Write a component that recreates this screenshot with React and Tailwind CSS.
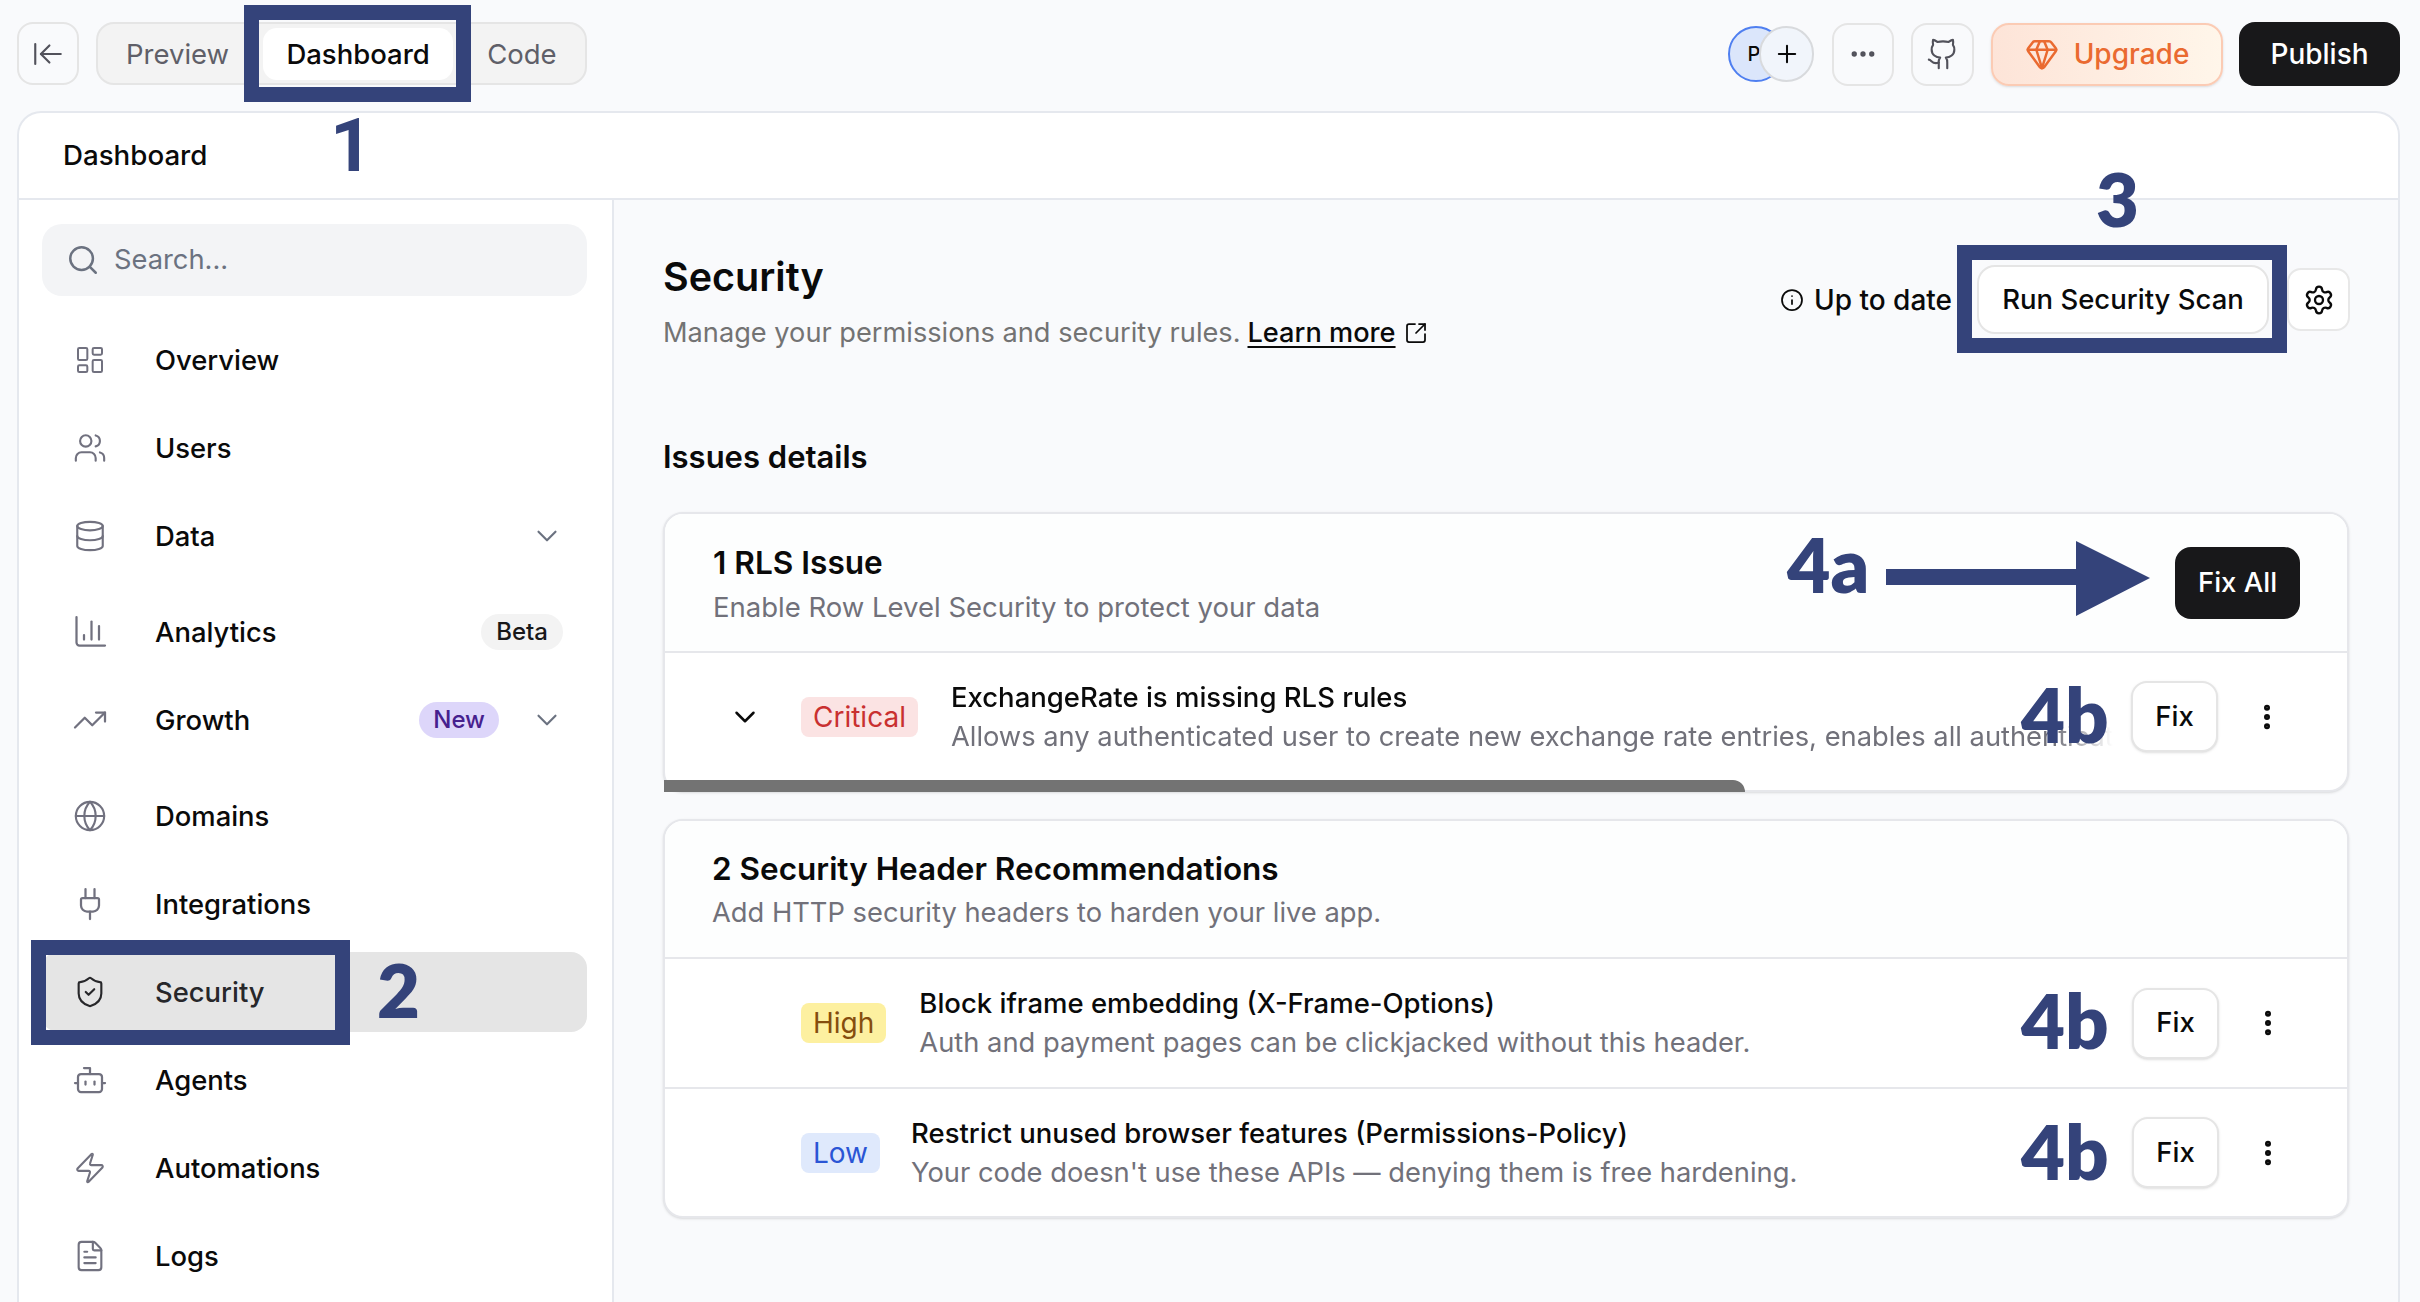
import React from 'react';
import {
  ArrowLeftToLine, Plus, Ellipsis, Gem, Search, LayoutDashboard, Users, Database, ChevronDown,
  TrendingUp, Globe, Plug, ShieldCheck, Bot, Zap, FileText, Info, Settings, SquareArrowOutUpRight, EllipsisVertical,
} from 'lucide-react';

const Github = (p) => (
  <svg width="36" height="36" viewBox="0 0 24 24" fill="none" stroke="currentColor" strokeWidth="1.5" strokeLinecap="round" strokeLinejoin="round" {...p}>
    <path d="M15 22v-4a4.8 4.8 0 0 0-1-3.5c3 0 6-2 6-5.5.08-1.25-.27-2.48-1-3.5.28-1.15.28-2.35 0-3.5 0 0-1 0-3 1.5-2.64-.5-5.36-.5-8 0C6 2 5 2 5 2c-.3 1.15-.3 2.35 0 3.5A5.403 5.403 0 0 0 4 9c0 3.5 3 5.5 6 5.5-.39.49-.68 1.05-.85 1.65-.17.6-.22 1.23-.15 1.85v4" />
    <path d="M9 18c-4.51 2-5-2-7-2" />
  </svg>
);

const Chart = (p) => (
  <svg width="36" height="36" viewBox="0 0 24 24" fill="none" stroke="currentColor" strokeWidth="1.5" strokeLinecap="round" strokeLinejoin="round" {...p}>
    <path d="M3 2v17a2 2 0 0 0 2 2h17" />
    <path d="M8 17v-3" />
    <path d="M13 17V5" />
    <path d="M18 17V8" />
  </svg>
);

function Item({ icon: Icon, label, size = 36, right, active, className = '' }) {
  return (
    <div className={`flex h-[80px] items-center rounded-[16px] pl-[30px] ${active ? 'bg-[#e5e5e5]' : ''} ${className}`}>
      <div className={`flex w-[36px] shrink-0 items-center justify-center ${active ? 'text-[#27272a]' : 'text-[#71717f]'}`}>
        <Icon size={size} strokeWidth={1.5} />
      </div>
      <span className={`ml-[47px] pt-[2px] text-[27.4px] font-medium ${active ? 'text-[#27272a]' : 'text-[#0a0a0a]'}`}>{label}</span>
      {right}
    </div>
  );
}

function SideChevron() {
  return <ChevronDown size={34} strokeWidth={1.5} className="text-[#6b7280]" />;
}

function Badge({ className, children }) {
  return <span className={`shrink-0 rounded-[8px] px-[12px] text-[28px] leading-[40px] ${className}`}>{children}</span>;
}

function Row({ badge, chevron, title, sub, fade, h, pr, border, textGap = 'ml-[33px]' }) {
  return (
    <div className={`flex items-center ${h} ${pr} ${border ? 'border-b-2 border-[#e6e7eb]' : ''}`}>
      <div className="flex w-[136px] shrink-0 justify-center pl-[48px] pr-[25px] text-[#0a0a0a]">
        {chevron && <ChevronDown size={34} strokeWidth={1.75} className="shrink-0" />}
      </div>
      {badge}
      <div className={`${textGap} min-w-0 flex-1 whitespace-nowrap overflow-hidden ${fade ? '[mask-image:linear-gradient(to_right,black_calc(100%-60px),transparent)]' : ''}`}>
        <div className="text-[27.5px] font-medium leading-[40px] text-[#0a0a0a]">{title}</div>
        <div className="text-[27.3px] leading-[40px] text-[#71717a]">{sub}</div>
      </div>
      <button className="ml-[18px] flex h-[71px] w-[87px] shrink-0 items-center justify-center rounded-[16px] border-2 border-[#e5e5e5] bg-white text-[27.5px] font-medium text-[#0a0a0a] shadow-sm">Fix</button>
      <div className="ml-[25px] flex w-[48px] shrink-0 items-center justify-center text-[#0a0a0a]">
        <EllipsisVertical size={32} strokeWidth={2.5} />
      </div>
    </div>
  );
}

const annot = "absolute font-['Lato',sans-serif] font-extrabold leading-none text-[#34437a]";

export default function App() {
  return (
    <div className="relative h-[1302px] w-[2420px] overflow-hidden bg-[#f9fafc] font-['Inter',sans-serif]">
      {/* top bar */}
      <div className="flex h-[85px] items-start pl-[17px] pr-[20px] pt-[22px]">
        <button className="flex h-[63px] w-[62px] items-center justify-center rounded-[16px] border-2 border-[#e5e5e5] text-[#52525b]">
          <ArrowLeftToLine size={34} strokeWidth={1.5} />
        </button>
        <div className="ml-[17px] flex h-[63px] items-center rounded-[18px] border-2 border-[#e5e5e5] bg-[#f3f3f3] text-[27.5px]">
          <span className="pl-[28px] pr-[28px] pt-[2px] text-[#5f5f68]">Preview</span>
          <span className="ml-[6px] flex h-[52px] w-[190px] items-center justify-center rounded-[14px] bg-white pt-[2px] font-medium text-[#0a0a0a]">Dashboard</span>
          <span className="ml-[6px] pl-[28px] pr-[28px] pt-[2px] text-[#5f5f68]">Code</span>
        </div>
        <div className="ml-auto flex items-center gap-[17px]">
          <div className="mr-px flex items-center">
            <div className="flex h-[56px] w-[56px] items-center justify-center rounded-full border-2 border-[#4f7ff0] bg-[#dbe6fb] pr-[4px] text-[20px] font-medium text-[#0a0a0a]">P</div>
            <div className="-ml-[25px] z-10 flex h-[56px] w-[55px] items-center justify-center rounded-full border-2 border-[#d8dadd] bg-[#f1f5fb] text-[#0a0a0a]">
              <Plus size={28} strokeWidth={1.75} />
            </div>
          </div>
          <button className="flex h-[63px] w-[62px] items-center justify-center rounded-[16px] border-2 border-[#e5e5e5] text-[#52525b]">
            <Ellipsis size={30} strokeWidth={2.25} />
          </button>
          <button className="flex h-[63px] w-[63px] items-center justify-center rounded-[16px] border-2 border-[#e5e5e5] text-[#52525b]">
            <Github width="34" height="34" />
          </button>
          <button className="flex h-[63px] w-[232px] items-center justify-center gap-[15px] rounded-[18px] border-2 border-[#fbcbb4] bg-gradient-to-r from-[#fde4d8] to-[#fff6ea] text-[28px] font-medium text-[#ea6a30] shadow-sm">
            <Gem size={34} strokeWidth={1.75} />
            Upgrade
          </button>
          <button className="-ml-px flex h-[64px] w-[161px] items-center justify-center rounded-[16px] bg-[#18181a] text-[28px] font-medium text-white">Publish</button>
        </div>
      </div>

      {/* main panel */}
      <div className="ml-[17px] mt-[26px] flex h-[1191px] w-[2383px] flex-col overflow-hidden rounded-t-[24px] border-2 border-b-0 border-[#e5e8ee] bg-white">
        <div className="flex h-[87px] shrink-0 items-center border-b-2 border-[#e5e8ee] pl-[44px] text-[27.7px] font-medium text-[#0a0a0a]">Dashboard</div>
        <div className="flex min-h-0 flex-1">
          {/* sidebar */}
          <aside className="w-[595px] shrink-0 border-r-2 border-[#e5e8ee] pl-[23px] pr-[25px] pt-[24px]">
            <div className="flex h-[72px] items-center rounded-[20px] bg-[#f3f4f6] pl-[24px] text-[27.3px] text-[#6b7280]">
              <Search size={34} strokeWidth={1.75} />
              <span className="ml-[14px]">Search...</span>
            </div>
            <nav className="mt-[24px] flex flex-col gap-[8px]">
              <Item icon={LayoutDashboard} label="Overview" size={32} />
              <Item icon={Users} label="Users" size={34} />
              <Item icon={Database} label="Data" size={34} right={<span className="ml-auto pr-[23px]"><SideChevron /></span>} />
              <Item className="mt-[8px]" icon={Chart} label="Analytics" right={<span className="ml-auto mr-[24px] rounded-full bg-[#f3f3f3] px-[15px] text-[24px] font-medium leading-[36px] text-[#18181a]">Beta</span>} />
              <Item icon={TrendingUp} label="Growth" right={
                <span className="ml-auto flex items-center pr-[23px]">
                  <span className="mr-[31px] rounded-full bg-[#ddd6fa] px-[14px] text-[24px] font-medium leading-[36px] text-[#46208e]">New</span>
                  <SideChevron />
                </span>
              } />
              <Item className="mt-[8px]" icon={Globe} label="Domains" size={34} />
              <Item icon={Plug} label="Integrations" />
              <Item icon={ShieldCheck} label="Security" size={34} active />
              <Item icon={Bot} label="Agents" />
              <Item icon={Zap} label="Automations" size={34} />
              <Item icon={FileText} label="Logs" size={34} />
            </nav>
          </aside>

          {/* content */}
          <main className="min-w-0 flex-1 bg-[#f9fafc] pl-[49px] pr-[49px] pt-[53px]">
            <div className="flex items-start justify-between">
              <div>
                <h1 className="text-[39.5px] font-semibold leading-[48px] text-[#0a0a0a]">Security</h1>
                <p className="mt-[14px] flex items-center text-[27.2px] leading-[36px] text-[#737373]">
                  Manage your permissions and security rules.
                  <span className="ml-[7px] font-medium text-[#0a0a0a] underline underline-offset-4">Learn more</span>
                  <SquareArrowOutUpRight size={24} strokeWidth={1.75} className="ml-[8px] text-[#0a0a0a]" />
                </p>
              </div>
              <div className="-mr-[1px] mt-[12px] flex items-center">
                <Info size={24} strokeWidth={1.75} className="text-[#0a0a0a]" />
                <span className="ml-[10px] text-[28px] font-medium text-[#0a0a0a]">Up to date</span>
                <button className="ml-[25px] flex h-[69px] w-[292px] items-center justify-center rounded-[18px] border-2 border-[#e5e5e5] bg-white text-[27.5px] font-medium text-[#0a0a0a]">Run Security Scan</button>
                <button className="ml-[18px] flex h-[63px] w-[63px] items-center justify-center rounded-[14px] border-2 border-[#e8e8e8] bg-white text-[#0a0a0a]">
                  <Settings size={32} strokeWidth={1.75} />
                </button>
              </div>
            </div>

            <h2 className="mt-[86px] text-[31px] font-semibold leading-[40px] text-[#0a0a0a]">Issues details</h2>

            <section className="relative mt-[35px] rounded-[20px] border-2 border-[#e6e7eb] bg-white pb-[10px] shadow-sm">
              <div className="flex h-[139px] items-center justify-between rounded-t-[18px] border-b-2 border-[#e6e7eb] bg-[#fdfefe] pl-[48px] pr-[47px]">
                <div className="mt-[4px]">
                  <h3 className="text-[31.6px] font-semibold leading-[40px] text-[#0a0a0a]">1 RLS Issue</h3>
                  <p className="mt-[4px] text-[27.5px] leading-[40px] text-[#71717a]">Enable Row Level Security to protect your data</p>
                </div>
                <button className="flex h-[72px] w-[125px] items-center justify-center rounded-[16px] bg-[#18181a] text-[27.5px] font-medium text-white">Fix All</button>
              </div>
              <div className="overflow-hidden">
                <Row
                  chevron fade h="h-[127px]" pr="pr-[56px]"
                  badge={<Badge className="bg-[#fbe3e3] text-[#c93030]">Critical</Badge>}
                  title="ExchangeRate is missing RLS rules"
                  sub="Allows any authenticated user to create new exchange rate entries, enables all authenticated users to read and write"
                />
              </div>
              <div className="absolute -bottom-[2px] -left-[1px] h-[12px] w-[1081px] rounded-b-[10px] rounded-tr-full bg-[#737373]" />
            </section>

            <section className="mt-[27px] overflow-hidden rounded-[20px] border-2 border-[#e6e7eb] bg-white shadow-sm">
              <div className="h-[138px] border-b-2 border-[#e6e7eb] bg-[#fdfefe] pl-[47px] pt-[28px]">
                <h3 className="text-[31.5px] font-semibold leading-[40px] text-[#0a0a0a]">2 Security Header Recommendations</h3>
                <p className="mt-[4px] text-[27.3px] leading-[40px] text-[#71717a]">Add HTTP security headers to harden your live app.</p>
              </div>
              <Row
                border h="h-[130px]" pr="pr-[55px]"
                badge={<Badge className="bg-[#fdf0a0] text-[#854d0e]">High</Badge>}
                title="Block iframe embedding (X-Frame-Options)"
                sub="Auth and payment pages can be clickjacked without this header."
              />
              <Row
                h="h-[127px]" pr="pr-[55px]" textGap="ml-[31px]"
                badge={<Badge className="bg-[#dfe9fc] text-[#2a55d5]">Low</Badge>}
                title="Restrict unused browser features (Permissions-Policy)"
                sub="Your code doesn't use these APIs — denying them is free hardening."
              />
            </section>
          </main>
        </div>
      </div>

      {/* annotations */}
      <div className="absolute left-[244px] top-[5px] h-[97px] w-[227px] border-[15px] border-[#34437a]" />
      <div className="absolute left-[31px] top-[940px] h-[105px] w-[319px] border-[15px] border-[#34437a]" />
      <div className="absolute left-[1957px] top-[245px] h-[108px] w-[330px] border-[15px] border-[#34437a]" />

      <span className="absolute left-[330px] top-[109px] font-['Roboto',sans-serif] text-[74px] font-bold leading-none text-[#34437a]">1</span>
      <span className={`${annot} left-[377px] top-[953px] text-[74px]`}>2</span>
      <span className={`${annot} left-[2096px] top-[162px] text-[74px]`}>3</span>
      <span className={`${annot} left-[1787px] top-[527px] text-[75px]`}>4a</span>
      <span className={`${annot} left-[2021px] top-[676px] text-[76px]`}>4b</span>
      <span className={`${annot} left-[2021px] top-[982px] text-[76px]`}>4b</span>
      <span className={`${annot} left-[2021px] top-[1113px] text-[76px]`}>4b</span>

      <svg className="absolute left-[1886px] top-[541px]" width="264" height="75" viewBox="0 0 264 75">
        <path d="M0 28H190V0L264 37L190 75V44H0Z" fill="#34437a" />
      </svg>
    </div>
  );
}
